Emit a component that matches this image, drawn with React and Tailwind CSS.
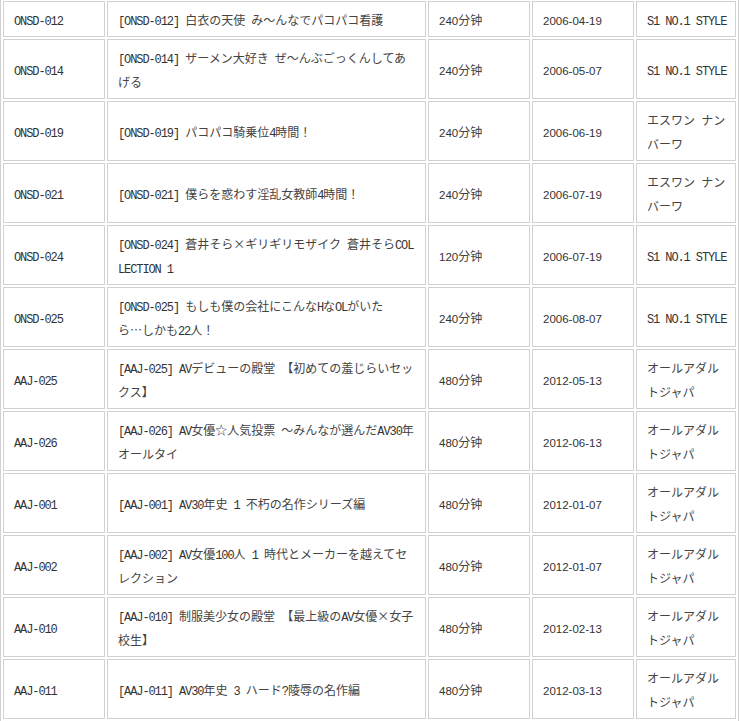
import React from "react"

const S1 = ["S1 NO.1 STYLE"]
const ESUWAN = ["エスワン ナン", "バーワ"]
const AAJ = ["オールアダル", "トジャパ"]

const rows = [
  ["ONSD-012", ["[ONSD-012] 白衣の天使 み～んなでパコパコ看護"], "240分钟", "2006-04-19", S1],
  ["ONSD-014", ["[ONSD-014] ザーメン大好き ぜ～んぶごっくんしてあ", "げる"], "240分钟", "2006-05-07", S1],
  ["ONSD-019", ["[ONSD-019] パコパコ騎乗位4時間！"], "240分钟", "2006-06-19", ESUWAN],
  ["ONSD-021", ["[ONSD-021] 僕らを惑わす淫乱女教師4時間！"], "240分钟", "2006-07-19", ESUWAN],
  ["ONSD-024", ["[ONSD-024] 蒼井そら×ギリギリモザイク 蒼井そらCOL", "LECTION 1"], "120分钟", "2006-07-19", S1],
  ["ONSD-025", ["[ONSD-025] もしも僕の会社にこんなHなOLがいた", "ら…しかも22人！"], "240分钟", "2006-08-07", S1],
  ["AAJ-025", ["[AAJ-025] AVデビューの殿堂 【初めての羞じらいセッ", "クス】"], "480分钟", "2012-05-13", AAJ],
  ["AAJ-026", ["[AAJ-026] AV女優☆人気投票 ～みんなが選んだAV30年", "オールタイ"], "480分钟", "2012-06-13", AAJ],
  ["AAJ-001", ["[AAJ-001] AV30年史 1 不朽の名作シリーズ編"], "480分钟", "2012-01-07", AAJ],
  ["AAJ-002", ["[AAJ-002] AV女優100人 1 時代とメーカーを越えてセ", "レクション"], "480分钟", "2012-01-07", AAJ],
  ["AAJ-010", ["[AAJ-010] 制服美少女の殿堂 【最上級のAV女優×女子", "校生】"], "480分钟", "2012-02-13", AAJ],
  ["AAJ-011", ["[AAJ-011] AV30年史 3 ハード?陵辱の名作編"], "480分钟", "2012-03-13", AAJ],
]

// latin runs in a narrow mono, the rest in a CJK face
function Mixed({ text, sans }) {
  const runs = text.match(/[\x00-\x7F]+|[^\x00-\x7F]+/g) || []
  return runs.map((r, i) =>
    /^[\x00-\x7F]+$/.test(r) ? (
      sans ? (
        <span key={i} className="font-['Liberation_Sans'] text-[11.5px] leading-none">{r}</span>
      ) : (
        <span key={i} className="font-['Liberation_Mono'] text-[12px] tracking-[-1.1px] leading-none">{r}</span>
      )
    ) : (
      <span key={i} className="font-['Noto_Sans_CJK_JP'] text-[12px] text-[#444] leading-none">{r}</span>
    )
  )
}

function Lines({ lines, sans }) {
  return lines.map((l, i) => (
    <div key={i} className="h-[24px] leading-[24px] whitespace-pre">
      <Mixed text={l} sans={sans} />
    </div>
  ))
}

const td = "border border-[#d2d2d2] px-[10px] pt-[4px] pb-[6px] align-middle leading-[24px] text-[#333] overflow-hidden"

export default function App() {
  return (
    <div className="w-[739px] h-[721px] overflow-hidden bg-white font-['Noto_Sans_CJK_JP',sans-serif]">
      <table className="w-[739px] mt-[-2px] table-fixed border border-[#d2d2d2] border-separate border-spacing-[2px]">
        <tbody>
          {rows.map((r, i) => (
            <tr key={i}>
              <td className={`${td} w-[102px]`}>
                <Lines lines={[r[0]]} />
              </td>
              <td className={`${td} w-[319px]`}>
                <Lines lines={r[1]} />
              </td>
              <td className={`${td} w-[102px]`}>
                <Lines lines={[r[2]]} sans />
              </td>
              <td className={`${td} w-[102px]`}>
                <Lines lines={[r[3]]} sans />
              </td>
              <td className={`${td} w-[100px]`}>
                <Lines lines={r[4]} />
              </td>
            </tr>
          ))}
        </tbody>
      </table>
    </div>
  )
}
